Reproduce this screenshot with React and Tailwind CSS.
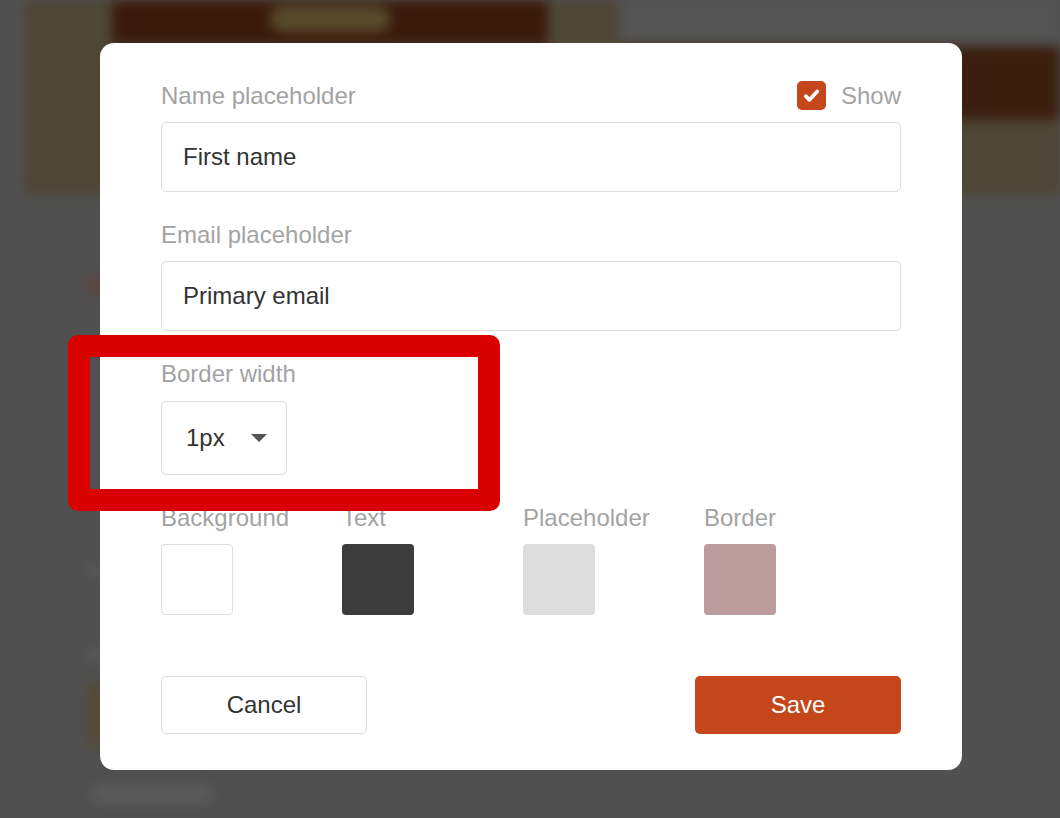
const FONT = { fontFamily: '"Liberation Sans", Arial, sans-serif' }

// blurred page behind the dim overlay
function Backdrop() {
  return (
    <div className="pointer-events-none absolute inset-0 overflow-hidden bg-[#505050]">
      <div className="flex h-full flex-col blur-[6px]">
        <div className="flex h-[195px]">
          <div className="w-[24px] bg-[#505050]" />
          <div className="w-[88px] bg-[#4e4736]" />
          <div className="flex w-[436px] flex-col bg-[#4e4736]">
            <div className="flex h-[45px] justify-center bg-[#3b1a0c] pt-[6px]">
              <div className="h-[26px] w-[120px] rounded-full bg-[#574b2b]" />
            </div>
          </div>
          <div className="w-[72px] bg-[#4e4736]" />
          <div className="flex flex-1 flex-col">
            <div className="h-[46px] bg-[#545454]" />
            <div className="h-[74px] bg-[#3b1e0e]" />
            <div className="flex-1 bg-[#4e4636]" />
          </div>
        </div>
        <div className="flex flex-col items-start pl-[86px]">
          <div className="mt-[82px] h-[18px] w-[20px] rounded-full bg-[#5e4440]" />
          <div className="mt-[270px] h-[12px] w-[18px] rounded-full bg-[#5a5a5a]" />
          <div className="mt-[72px] h-[12px] w-[18px] rounded-full bg-[#5a5a5a]" />
          <div className="mt-[22px] h-[64px] w-[40px] bg-[#524b39]" />
          <div className="mt-[38px] ml-[6px] h-[18px] w-[120px] rounded bg-[#5b5b5b]" />
        </div>
      </div>
    </div>
  )
}

function Label({ children }) {
  return <div className="text-[24px] leading-[28px] text-[#a3a3a3]">{children}</div>
}

function TextField({ value }) {
  return (
    <div className="mt-[12px] flex h-[70px] items-center rounded-[5px] border border-[#dedede] bg-white px-[21px] text-[24px] text-[#333333]">
      {value}
    </div>
  )
}

function Swatch({ label, color, bordered }) {
  return (
    <div className="w-[181px]">
      <Label>{label}</Label>
      <div
        className={`mt-[12px] h-[71px] w-[72px] rounded-[4px] ${bordered ? 'border border-[#dddddd]' : ''}`}
        style={{ background: color }}
      />
    </div>
  )
}

export default function App() {
  return (
    <div className="relative h-[818px] w-[1060px] overflow-hidden" style={FONT}>
      <Backdrop />

      <div className="relative pl-[100px] pt-[43px]">
        <div className="w-[862px] rounded-[14px] bg-white px-[61px] pb-[36px] pt-[38px]">
          <div className="flex h-[29px] items-center justify-between">
            <Label>Name placeholder</Label>
            <div className="flex items-center gap-[15px]">
              <span className="flex h-[29px] w-[29px] items-center justify-center rounded-[5px] bg-[#c4461a]">
                <svg width="19" height="19" viewBox="0 0 16 16" fill="none" stroke="#fff" strokeWidth="3.2" strokeLinecap="round" strokeLinejoin="round">
                  <path d="M3.2 8.6l3.1 3L12.8 4.6" />
                </svg>
              </span>
              <Label>Show</Label>
            </div>
          </div>
          <TextField value="First name" />

          <div className="mt-[29px]">
            <Label>Email placeholder</Label>
          </div>
          <TextField value="Primary email" />

          <div className="mt-[29px]">
            <Label>Border width</Label>
          </div>
          <div className="mt-[13px] flex h-[74px] w-[126px] items-center justify-between rounded-[5px] border border-[#dedede] pl-[24px] pr-[19px] text-[24px] text-[#333333]">
            <span>1px</span>
            <svg width="16" height="8" viewBox="0 0 16 8" fill="#555555">
              <path d="M0 0h16L8 8z" />
            </svg>
          </div>

          <div className="mt-[29px] flex">
            <Swatch label="Background" color="#ffffff" bordered />
            <Swatch label="Text" color="#3c3c3c" />
            <Swatch label="Placeholder" color="#dddddd" />
            <Swatch label="Border" color="#bc9c9c" />
          </div>

          <div className="mt-[61px] flex justify-between">
            <button className="h-[58px] w-[206px] rounded-[5px] border border-[#dedede] bg-white text-[24px] text-[#333333]">
              Cancel
            </button>
            <button className="h-[58px] w-[206px] rounded-[5px] bg-[#c4461a] text-[24px] text-white">
              Save
            </button>
          </div>
        </div>
      </div>

      {/* annotation frame drawn over the dialog */}
      <div className="pointer-events-none absolute left-[68px] top-[335px] h-[176px] w-[432px] rounded-[10px] border-[22px] border-[#d90000]" />
    </div>
  )
}
